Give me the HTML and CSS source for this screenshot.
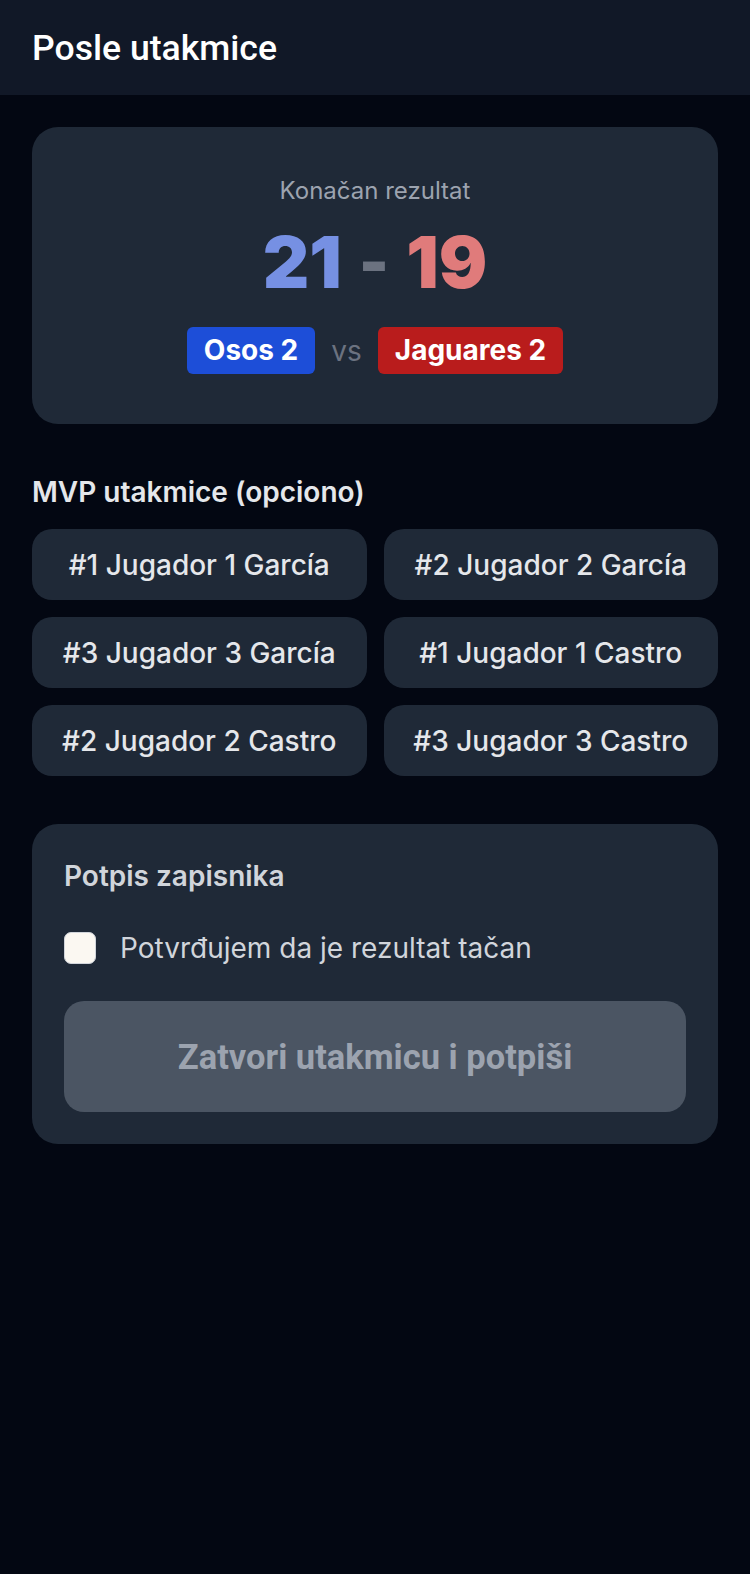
FILE: index.html
```html
<!DOCTYPE html>
<html lang="sr">
<head>
  <meta charset="UTF-8"/>
  <meta name="viewport" content="width=device-width, initial-scale=1"/>
  <title>Posle utakmice</title>
  <link rel="stylesheet" href="styles.css">
</head>
<body>
  <header class="topbar">
    <h1>Posle utakmice</h1>
  </header>
  <main class="page">
    <section class="score-card">
      <div class="score-label">Konačan rezultat</div>
      <div class="score">
        <span class="pts home">21</span>
        <span class="dash">-</span>
        <span class="pts away">19</span>
      </div>
      <div class="teams">
        <span class="team-tag home-tag">Osos 2</span>
        <span class="vs">vs</span>
        <span class="team-tag away-tag">Jaguares 2</span>
      </div>
    </section>

    <section class="mvp">
      <h2 class="section-title">MVP utakmice (opciono)</h2>
      <div class="mvp-grid">
        <button class="mvp-btn">#1 Jugador 1 García</button>
        <button class="mvp-btn">#2 Jugador 2 García</button>
        <button class="mvp-btn">#3 Jugador 3 García</button>
        <button class="mvp-btn">#1 Jugador 1 Castro</button>
        <button class="mvp-btn">#2 Jugador 2 Castro</button>
        <button class="mvp-btn">#3 Jugador 3 Castro</button>
      </div>
    </section>

    <section class="sign-card">
      <h2 class="sign-title">Potpis zapisnika</h2>
      <label class="confirm">
        <input type="checkbox" id="confirm"/>
        <span>Potvrđujem da je rezultat tačan</span>
      </label>
      <button class="btn-close" id="closeBtn" disabled>Zatvori utakmicu i potpiši</button>
    </section>
  </main>
</body>
</html>
```

FILE: styles.css
```css
* { box-sizing: border-box; }
body { margin: 0; background: #030712; color: #e5e7eb; font-family: Inter, 'Noto Sans', sans-serif; min-height: 1574px; }

.topbar { background: #111827; height: 95px; display: flex; align-items: center; padding: 0 32px; }
.topbar h1 { margin: 0; font-family: Roboto, 'Liberation Sans', sans-serif; font-weight: 500; font-size: 35.6px; color: #fff; }

.page { padding: 32px; }

.score-card { background: #1f2937; border-radius: 26px; padding: 48px 0 50px; text-align: center; }
.score-label { color: #9ca3af; font-size: 24px; line-height: 32px; }
.score { display: flex; justify-content: center; align-items: center; gap: 17px; margin-top: 19px; height: 72px; }
.pts { font-size: 72px; font-weight: 900; line-height: 1; }
.home { color: #7690e3; }
.away { color: #e07b7b; }
.dash { font-size: 64px; font-weight: 900; color: #6b7280; line-height: 1; }
.teams { display: flex; justify-content: center; align-items: center; gap: 16px; margin-top: 29px; }
.team-tag { color: #fff; font-weight: 700; font-size: 28px; height: 47px; line-height: 47px; padding: 0 17px; border-radius: 6px; }
.home-tag { background: #1d4ed8; }
.away-tag { background: #b91c1c; }
.vs { color: #6b7280; font-size: 28px; }

.mvp { margin-top: 48px; }
.section-title { margin: 0 0 17px; font-size: 28px; font-weight: 600; color: #e5e7eb; line-height: 40px; }
.mvp-grid { display: grid; grid-template-columns: 1fr 1fr; gap: 17px; }
.mvp-btn { background: #1f2937; border: none; border-radius: 20px; height: 71px; color: #e5e7eb; font-family: inherit; font-size: 28px; font-weight: 500; }

.sign-card { margin-top: 48px; background: #1f2937; border-radius: 26px; padding: 32px; }
.sign-title { margin: 0; font-size: 28px; font-weight: 600; color: #d1d5db; line-height: 40px; }
.confirm { display: flex; align-items: center; gap: 24px; margin-top: 32px; font-size: 28px; line-height: 40px; color: #d1d5db; }
.confirm input { appearance: none; margin: 0; width: 32px; height: 32px; border-radius: 7px; background: #fbf8f2; border: 1px solid #d1d5db; }
.btn-close { margin-top: 33px; width: 100%; height: 111px; border: none; border-radius: 20px; background: #4b5563; color: #9ca3af; font-family: Roboto, 'Liberation Sans', sans-serif; font-weight: 700; font-size: 34.5px; }
```
